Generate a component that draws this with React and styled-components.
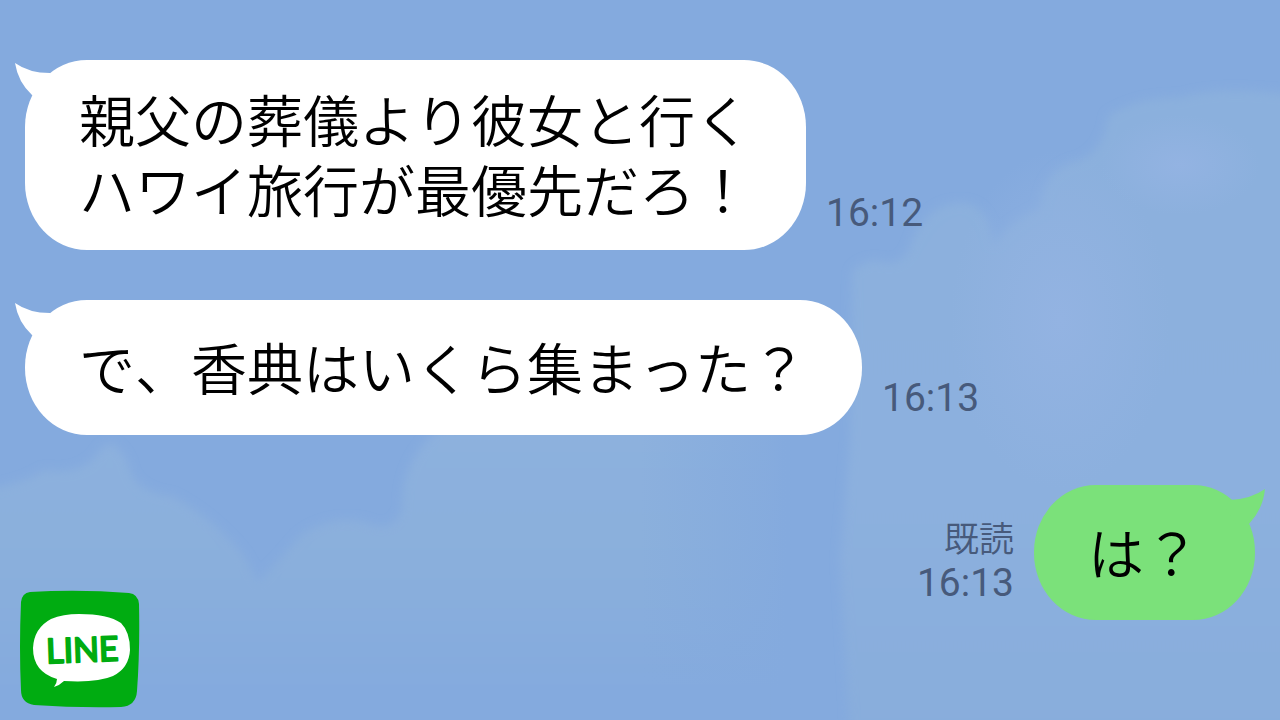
import styled, { createGlobalStyle } from "styled-components";

const GlobalStyle = createGlobalStyle`
  * {
    box-sizing: border-box;
  }

  body {
    margin: 0;
    background: #84aade;
    font-family: "Noto Sans CJK JP", sans-serif;
  }
`;

const Page = styled.main`
  position: relative;
  min-height: 100vh;
  overflow: hidden;
`;

const Sky = styled.svg`
  position: absolute;
  inset: 0;
  width: 100%;
  height: 100%;
`;

const MessageList = styled.ul`
  position: relative;
  display: flex;
  flex-direction: column;
  gap: 50px;
  margin: 0;
  padding: 60px 25px 100px;
  list-style: none;
`;

const MessageRow = styled.li`
  display: flex;
  flex-direction: ${({ $mine }) => ($mine ? "row-reverse" : "row")};
  align-items: flex-end;
  gap: 20px;
`;

const Bubble = styled.div`
  position: relative;
  display: flex;
  align-items: center;
  min-height: 135px;
  padding: 23px 55px 27px 54px;
  border-radius: 62px / 67px;
  background: ${({ $mine }) => ($mine ? "#7be17a" : "#fff")};
`;

const BubbleText = styled.p`
  margin: 0;
  color: #000;
  font-size: 56px;
  font-weight: 350;
  font-kerning: none;
  line-height: 70px;
  white-space: pre-line;
`;

const Tail = styled.svg`
  position: absolute;
  top: 0;
  ${({ $mine }) => ($mine ? "right: -10px;" : "left: -10px;")}
  width: 40px;
  height: 40px;
  fill: ${({ $mine }) => ($mine ? "#7be17a" : "#fff")};
`;

const Meta = styled.div`
  display: flex;
  flex-direction: column;
  align-items: ${({ $mine }) => ($mine ? "flex-end" : "flex-start")};
  padding-bottom: 14px;
  color: #475a7b;
`;

const ReadMark = styled.span`
  font-size: 35px;
  font-weight: 350;
  line-height: 46px;
`;

const Time = styled.time`
  font-family: Roboto, sans-serif;
  font-size: 39px;
  line-height: 46px;
`;

const Logo = styled.svg`
  position: absolute;
  left: 19px;
  bottom: 12px;
  width: 121px;
  height: 118px;
`;

const LogoText = styled.text`
  fill: #00ac11;
  stroke: #00ac11;
  stroke-width: 2px;
  stroke-linejoin: round;
  font-family: Lato, sans-serif;
  font-size: 34px;
  font-weight: 400;
`;

const MESSAGES = [
  {
    id: 1,
    text: "親父の葬儀より彼女と行く\nハワイ旅行が最優先だろ！",
    time: "16:12",
  },
  { id: 2, text: "で、香典はいくら集まった？", time: "16:13" },
  { id: 3, text: "は？", time: "16:13", mine: true, read: true },
];

function Clouds() {
  return (
    <Sky viewBox="0 0 1280 720" preserveAspectRatio="none" aria-hidden="true">
      <defs>
        <filter id="soft" x="-10%" y="-10%" width="120%" height="120%">
          <feGaussianBlur stdDeviation="5" />
        </filter>
        <linearGradient id="lowCloud" x1="0" y1="0" x2="0" y2="1">
          <stop offset="0" stopColor="#8db1de" />
          <stop offset="0.45" stopColor="#8aafdc" />
          <stop offset="0.85" stopColor="#84aade" />
        </linearGradient>
        <linearGradient id="highCloud" x1="0" y1="0" x2="0" y2="1">
          <stop offset="0" stopColor="#8bb0dd" />
          <stop offset="0.6" stopColor="#8cb0de" />
          <stop offset="1" stopColor="#88addc" />
        </linearGradient>
        <linearGradient id="gap" x1="0" y1="0" x2="1" y2="0">
          <stop offset="0" stopColor="#84aade" stopOpacity="0" />
          <stop offset="1" stopColor="#84aade" />
        </linearGradient>
        <radialGradient id="glow">
          <stop offset="0" stopColor="#93b3e2" />
          <stop offset="1" stopColor="#93b3e2" stopOpacity="0" />
        </radialGradient>
      </defs>
      <path
        filter="url(#soft)"
        fill="url(#lowCloud)"
        d="M-20 490 Q24 484 44 470 Q84 476 100 450 Q114 434 128 462 Q132 492 172 496 Q214 518 244 556 L258 582 Q280 560 300 536 Q330 514 366 522 Q392 534 402 510 Q400 460 440 428 L780 420 V740 H-20 Z"
      />
      <rect x="640" y="400" width="160" height="320" fill="url(#gap)" />
      <rect x="799" y="400" width="80" height="320" fill="#84aade" />
      <path
        filter="url(#soft)"
        fill="url(#highCloud)"
        d="M850 740 L840 560 L850 440 L852 272 Q866 256 884 262 Q905 266 912 240 Q930 200 965 203 Q990 206 994 246 Q1004 224 1040 208 Q1042 168 1080 160 Q1104 150 1108 116 Q1140 96 1180 98 Q1220 84 1300 96 V740 Z"
      />
      <ellipse cx="1060" cy="320" rx="110" ry="170" fill="url(#glow)" />
      <ellipse cx="1180" cy="165" rx="80" ry="50" fill="url(#glow)" />
    </Sky>
  );
}

function Message({ text, time, mine, read }) {
  return (
    <MessageRow $mine={mine}>
      <Bubble $mine={mine}>
        <Tail $mine={mine} viewBox="0 0 40 40" aria-hidden="true">
          <path
            d={
              mine
                ? "M40 4 Q26 14 5 15 L0 22 L14 44 L24 39 Q38 24 40 4 Z"
                : "M0 3 Q14 13 35 13 L40 20 L26 42 L17 35 Q3 22 0 3 Z"
            }
          />
        </Tail>
        <BubbleText>{text}</BubbleText>
      </Bubble>
      <Meta $mine={mine}>
        {read && <ReadMark>既読</ReadMark>}
        <Time dateTime={time}>{time}</Time>
      </Meta>
    </MessageRow>
  );
}

function LineLogo() {
  return (
    <Logo viewBox="0 0 121 118" role="img" aria-label="LINE">
      <path
        fill="#00ac11"
        d="M11 2 Q60 -1 110 3 Q119 4 120 14 Q121 60 118 101 Q117 116 102 117 Q58 118 15 115 Q2 113 2 100 Q0 58 2 12 Q3 3 11 2 Z"
      />
      <path
        fill="#fff"
        d="M60 24 Q89 24 102 33 Q111 42 111 60 Q110 78 94 86 Q78 93 45 91 Q41 95 35 97 Q38 93 38 89 Q14 82 14 58 Q15 38 32 29 Q44 24 60 24 Z"
      />
      <LogoText x="27" y="72" transform="rotate(-2 62 60)">
        LINE
      </LogoText>
    </Logo>
  );
}

export default function App() {
  return (
    <>
      <GlobalStyle />
      <Page lang="ja">
        <Clouds />
        <MessageList>
          {MESSAGES.map((message) => (
            <Message key={message.id} {...message} />
          ))}
        </MessageList>
        <LineLogo />
      </Page>
    </>
  );
}
